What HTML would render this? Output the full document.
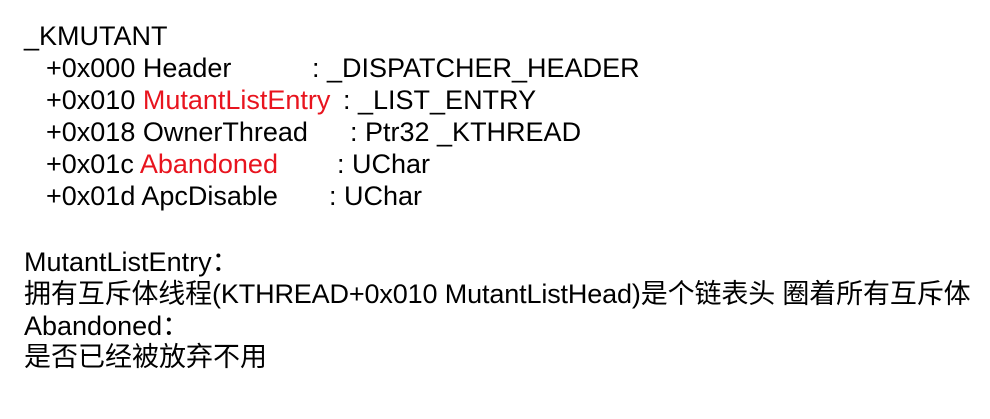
<!DOCTYPE html>
<html><head><meta charset="utf-8"><style>
body{margin:0;width:990px;height:419px;background:#fff;overflow:hidden;position:relative;font-family:"Liberation Sans","Noto Sans CJK SC",sans-serif;font-size:27px;color:#000}
.l{position:absolute;white-space:nowrap;line-height:32px}
.r{color:#e8141e}
</style></head><body>
<div class="l" style="left:24px;top:20px">_KMUTANT</div>
<div class="l" style="left:46px;top:52px">+0x000 Header</div><div class="l" style="left:312px;top:52px">: _DISPATCHER_HEADER</div>
<div class="l" style="left:46px;top:84px">+0x010 <span class="r">MutantListEntry</span></div><div class="l" style="left:343px;top:84px">: _LIST_ENTRY</div>
<div class="l" style="left:46px;top:116px">+0x018 OwnerThread</div><div class="l" style="left:350px;top:116px">: Ptr32 _KTHREAD</div>
<div class="l" style="left:46px;top:148px">+0x01c <span class="r">Abandoned</span></div><div class="l" style="left:337px;top:148px">: UChar</div>
<div class="l" style="left:46px;top:180px">+0x01d ApcDisable</div><div class="l" style="left:329px;top:180px">: UChar</div>
<div class="l" style="left:24px;top:246px">MutantListEntry：</div>
<div class="l" style="left:24px;top:278px;letter-spacing:-0.14px">拥有互斥体线程(KTHREAD+0x010 MutantListHead)是个链表头 圈着所有互斥体</div>
<div class="l" style="left:24px;top:310px">Abandoned：</div>
<div class="l" style="left:24px;top:341px">是否已经被放弃不用</div>
</body></html>
